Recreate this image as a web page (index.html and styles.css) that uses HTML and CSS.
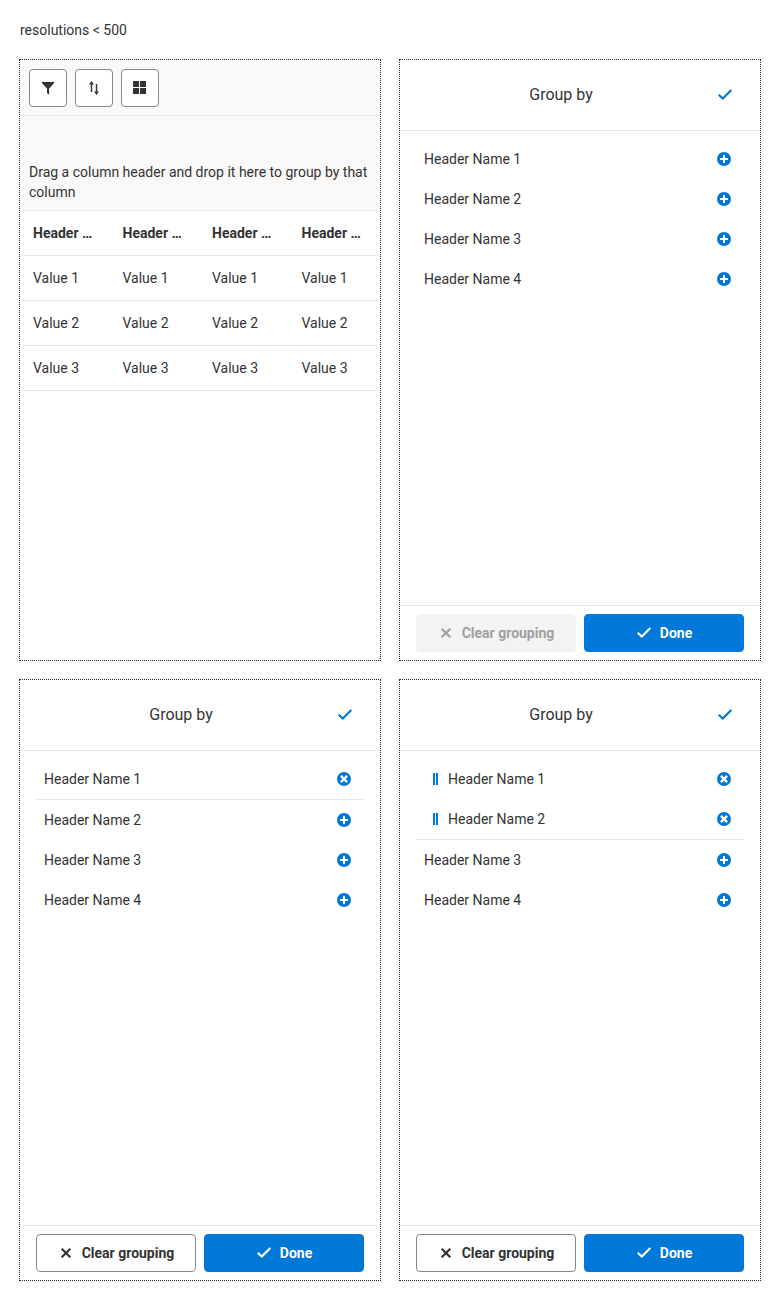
FILE: index.html
```html
<!DOCTYPE html>
<html lang="en">
<head>
<meta charset="utf-8">
<title>Group by</title>
<link rel="stylesheet" href="styles.css">
</head>
<body>
<svg class="sprite" aria-hidden="true">
  <symbol id="check" viewBox="0 0 16 16"><path d="M1.700 7.700 5.800 11.500 14.300 3" fill="none" stroke="currentColor" stroke-width="2.100"/></symbol>
  <symbol id="plus" viewBox="0 0 14 14"><circle cx="7" cy="7" r="7" fill="currentColor"/><path d="M7 3v8M3 7h8" stroke="#fff" stroke-width="2"/></symbol>
  <symbol id="remove" viewBox="0 0 14 14"><circle cx="7" cy="7" r="7" fill="currentColor"/><path d="M3.900 3.900l6.200 6.200M10.100 3.900l-6.200 6.200" stroke="#fff" stroke-width="2.300"/></symbol>
  <symbol id="cross" viewBox="0 0 16 16"><path d="M3.700 3.700l8.600 8.600M12.300 3.700L3.700 12.300" stroke="currentColor" stroke-width="2.200"/></symbol>
</svg>
<h1 class="title">resolutions &lt; 500</h1>
<main class="panels">
  <section class="panel grid-panel">
    <div class="toolbar">
      <button class="tool"><svg class="icon" viewBox="0 0 16 16"><path d="M1.800 2h12.400v1L9.100 8.500V14.700L7 13V8.500L1.800 3z" fill="currentColor"/></svg></button>
      <button class="tool"><svg class="icon" viewBox="0 0 16 16"><path d="M5.500 1 8 4.500H6.200V12H4.800V4.500H3zM10.500 15 8 11.500h1.800V4h1.400v7.500H13z" fill="currentColor"/></svg></button>
      <button class="tool"><svg class="icon" viewBox="0 0 16 16"><path d="M1 1h6v6H1zM8 1h6v6H8zM1 8h6v6H1zM8 8h6v6H8z" fill="currentColor"/></svg></button>
    </div>
    <div class="drop-area">Drag a column header and drop it here to group by that column</div>
    <table class="table">
      <thead><tr><th>Header …</th><th>Header …</th><th>Header …</th><th>Header …</th></tr></thead>
      <tbody>
        <tr><td>Value 1</td><td>Value 1</td><td>Value 1</td><td>Value 1</td></tr>
        <tr><td>Value 2</td><td>Value 2</td><td>Value 2</td><td>Value 2</td></tr>
        <tr><td>Value 3</td><td>Value 3</td><td>Value 3</td><td>Value 3</td></tr>
      </tbody>
    </table>
  </section>

  <section class="panel">
    <header class="head"><span class="head-text">Group by</span><svg class="icon"><use href="#check"/></svg></header>
    <div class="list">
      <div class="item"><span>Header Name 1</span><svg class="action"><use href="#plus"/></svg></div>
      <div class="item"><span>Header Name 2</span><svg class="action"><use href="#plus"/></svg></div>
      <div class="item"><span>Header Name 3</span><svg class="action"><use href="#plus"/></svg></div>
      <div class="item"><span>Header Name 4</span><svg class="action"><use href="#plus"/></svg></div>
    </div>
    <footer class="foot">
      <button class="button disabled" disabled><svg class="icon"><use href="#cross"/></svg>Clear grouping</button>
      <button class="button primary"><svg class="icon"><use href="#check"/></svg>Done</button>
    </footer>
  </section>

  <section class="panel">
    <header class="head"><span class="head-text">Group by</span><svg class="icon"><use href="#check"/></svg></header>
    <div class="list">
      <div class="grouped">
        <div class="item"><span>Header Name 1</span><svg class="action"><use href="#remove"/></svg></div>
      </div>
      <div class="item"><span>Header Name 2</span><svg class="action"><use href="#plus"/></svg></div>
      <div class="item"><span>Header Name 3</span><svg class="action"><use href="#plus"/></svg></div>
      <div class="item"><span>Header Name 4</span><svg class="action"><use href="#plus"/></svg></div>
    </div>
    <footer class="foot">
      <button class="button"><svg class="icon"><use href="#cross"/></svg>Clear grouping</button>
      <button class="button primary"><svg class="icon"><use href="#check"/></svg>Done</button>
    </footer>
  </section>

  <section class="panel">
    <header class="head"><span class="head-text">Group by</span><svg class="icon"><use href="#check"/></svg></header>
    <div class="list">
      <div class="grouped">
        <div class="item"><i class="handle"></i><span>Header Name 1</span><svg class="action"><use href="#remove"/></svg></div>
        <div class="item"><i class="handle"></i><span>Header Name 2</span><svg class="action"><use href="#remove"/></svg></div>
      </div>
      <div class="item"><span>Header Name 3</span><svg class="action"><use href="#plus"/></svg></div>
      <div class="item"><span>Header Name 4</span><svg class="action"><use href="#plus"/></svg></div>
    </div>
    <footer class="foot">
      <button class="button"><svg class="icon"><use href="#cross"/></svg>Clear grouping</button>
      <button class="button primary"><svg class="icon"><use href="#check"/></svg>Done</button>
    </footer>
  </section>
</main>
</body>
</html>
```
FILE: styles.css
```css
* { box-sizing: border-box; }
body {
  margin: 0;
  padding: 20px 19px 19px;
  background: #fff;
  color: #333;
  font: 14px/20px Roboto, sans-serif;
}
svg { display: block; flex: none; }
.sprite { display: none; }
.icon { width: 16px; height: 16px; }
.title { margin: 0 0 19px 1px; font-size: 14px; font-weight: 400; line-height: 20px; }
.panels { display: grid; grid-template-columns: 362px 362px; grid-auto-rows: 602px; gap: 18px; }
.panel { display: flex; flex-direction: column; border: 1px dotted #212121; }
.grid-panel { padding: 1px; }

.toolbar { display: flex; gap: 8px; height: 55px; padding: 8px; background: #faf9f8; border-bottom: 1px solid #e9e9e9; }
.tool {
  display: flex; align-items: center; justify-content: center;
  width: 38px; height: 38px; padding: 0;
  color: #333; background: #fff; border: 1px solid #8a8886; border-radius: 4px;
}
.drop-area { display: flex; align-items: flex-end; height: 95px; padding: 8px; background: #faf9f8; border-bottom: 1px solid #e9e9e9; }
.table { width: 358px; table-layout: fixed; border-collapse: separate; border-spacing: 0; }
.table th, .table td {
  height: 45px; padding: 0 12px; text-align: left; white-space: nowrap;
  border-bottom: 1px solid #e9e9e9;
}
.table th { font-weight: 700; }

.head { display: flex; align-items: center; height: 71px; padding: 0 16px; border-bottom: 1px solid #e9e9e9; }
.head-text { flex: 1; text-align: center; font-size: 16px; line-height: 24px; }
.head .icon { margin: 0 11px; color: #0078d7; }
.list { flex: 1; padding: 8px 16px; }
.item { display: flex; align-items: center; height: 40px; padding: 0 13px 0 8px; }
.grouped { border-bottom: 1px solid #e9e9e9; }
.action { width: 14px; height: 14px; margin-left: auto; color: #0078d7; }
.handle { width: 5px; height: 12px; margin: 0 10px 0 9px; border: solid #0078d7; border-width: 0 2px; }
.foot { display: grid; grid-template-columns: 1fr 1fr; gap: 8px; padding: 8px 16px; border-top: 1px solid #e9e9e9; }
.button {
  display: flex; align-items: center; justify-content: center; gap: 8px;
  height: 38px; padding: 0; font: 700 14px/20px Roboto, sans-serif;
  color: #333; background: #fff; border: 1px solid #8a8886; border-radius: 4px;
}
.disabled { color: #a0a0a0; background: #f3f3f3; border-color: #f3f3f3; }
.primary { color: #fff; background: #0078d7; border-color: #0078d7; }
```
